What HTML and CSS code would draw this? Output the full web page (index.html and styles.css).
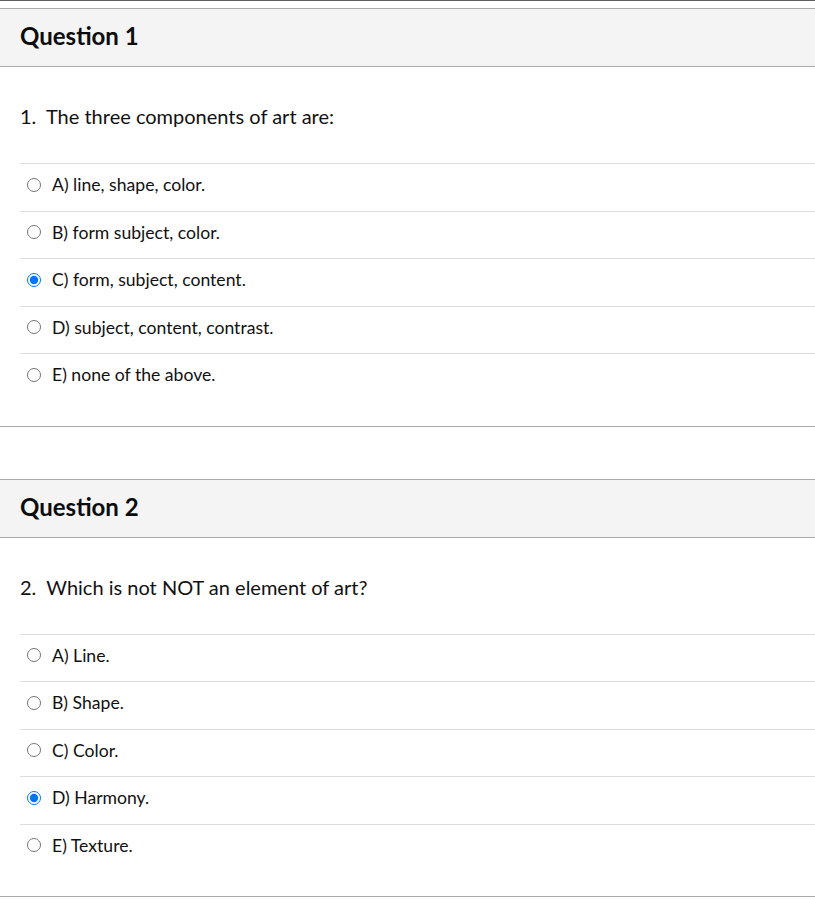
FILE: index.html
```html
<!DOCTYPE html>
<html lang="en">
<head>
    <meta charset="UTF-8">
    <meta name="viewport" content="width=device-width, initial-scale=1.0">
    <title>Quiz</title>
    <link rel="stylesheet" href="styles.css">
</head>
<body>

    <div class="quiz">
        <div class="question">
            <div class="question-header">Question 1</div>
            <div class="question-body">
                <p class="question-text">1.&nbsp; The three components of art are:</p>
                <ul class="answers">
                    <li class="answer"><label><input type="radio" name="q1">A) line, shape, color.</label></li>
                    <li class="answer"><label><input type="radio" name="q1">B) form subject, color.</label></li>
                    <li class="answer"><label><input type="radio" name="q1" checked>C) form, subject, content.</label></li>
                    <li class="answer"><label><input type="radio" name="q1">D) subject, content, contrast.</label></li>
                    <li class="answer"><label><input type="radio" name="q1">E) none of the above.</label></li>
                </ul>
            </div>
        </div>

        <div class="question">
            <div class="question-header">Question 2</div>
            <div class="question-body">
                <p class="question-text">2.&nbsp; Which is not NOT an element of art?</p>
                <ul class="answers">
                    <li class="answer"><label><input type="radio" name="q2">A) Line.</label></li>
                    <li class="answer"><label><input type="radio" name="q2">B) Shape.</label></li>
                    <li class="answer"><label><input type="radio" name="q2">C) Color.</label></li>
                    <li class="answer"><label><input type="radio" name="q2" checked>D) Harmony.</label></li>
                    <li class="answer"><label><input type="radio" name="q2">E) Texture.</label></li>
                </ul>
            </div>
        </div>
    </div>

</body>
</html>
```

FILE: styles.css
```css
body {
    margin: 0;
    font-family: Lato, "Open Sans", sans-serif;
    color: #111;
    background: #fff;
}

.quiz {
    border-top: 1px solid #5f5f5f;
    padding-top: 7px;
}

.question {
    border-top: 1px solid #aaa;
    border-bottom: 1px solid #aaa;
    margin-bottom: 52px;
}

.question:last-child {
    margin-bottom: 0;
}

.question-header {
    background-color: #f4f4f4; /* light grey band */
    border-bottom: 1px solid #aaa;
    height: 57px;
    line-height: 53px;
    padding-left: 20px;
    font-size: 24px;
    font-weight: bold;
    color: #0d0d0d;
}

.question-body {
    padding: 0 0 25px 20px;
}

.question-text {
    margin: 0;
    padding: 37px 0 35px;
    font-size: 20px;
    line-height: 24px;
}

.answers {
    list-style: none;
    margin: 0;
    padding: 0;
}

.answer {
    border-top: 1px solid #ddd;
    padding: 9px 0 14px 7px;
    line-height: 23.5px;
    font-size: 17.6px;
}

.answer label {
    display: flex;
    align-items: center;
    cursor: pointer;
}

.answer input {
    margin: 0 11px 0 0;
    width: 14px;
    height: 14px;
}
```
